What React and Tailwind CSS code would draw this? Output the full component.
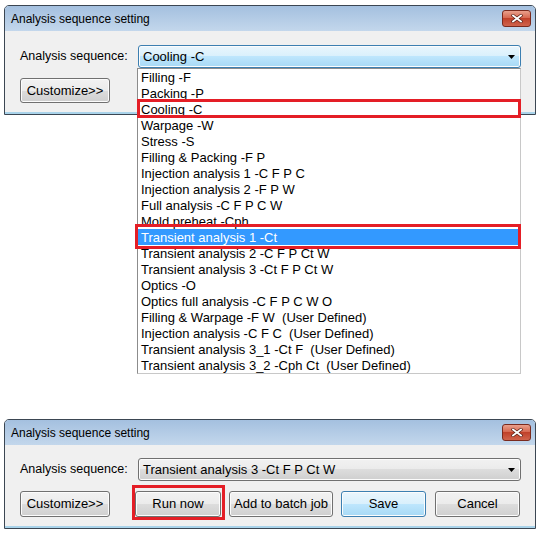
import React from 'react';

const items = [
  'Filling -F',
  'Packing -P',
  'Cooling -C',
  'Warpage -W',
  'Stress -S',
  'Filling & Packing -F P',
  'Injection analysis 1 -C F P C',
  'Injection analysis 2 -F P W',
  'Full analysis -C F P C W',
  'Mold preheat -Cph',
  'Transient analysis 1 -Ct',
  'Transient analysis 2 -C F P Ct W',
  'Transient analysis 3 -Ct F P Ct W',
  'Optics -O',
  'Optics full analysis -C F P C W O',
  'Filling & Warpage -F W  (User Defined)',
  'Injection analysis -C F C  (User Defined)',
  'Transient analysis 3_1 -Ct F  (User Defined)',
  'Transient analysis 3_2 -Cph Ct  (User Defined)',
];

const grayBtn =
  'border border-[#707070] rounded-[3px] bg-[linear-gradient(#f2f2f2,#ebebeb_50%,#dddddd_50%,#cfcfcf)] shadow-[inset_0_0_0_1px_#fcfcfc] flex items-center justify-center text-black';
const blueBtn =
  'border border-[#3c7fb1] rounded-[3px] bg-[linear-gradient(#eaf6fd,#d9f0fc_50%,#bee6fd_50%,#a7d9f5)] shadow-[inset_0_0_0_1px_#fcfcfc] flex items-center justify-center text-black';

const CloseButton = () => (
  <div className="w-[29px] h-[17px] rounded-[3px] border border-[#7a2a1e] bg-[linear-gradient(#e9a08c,#d5634b_50%,#c0412a_50%,#d0644c)] flex items-center justify-center">
    <svg width="12" height="9" viewBox="0 0 12 9">
      <path d="M2 1.5 L10 7.5 M10 1.5 L2 7.5" stroke="#5a2016" strokeWidth="3.2" strokeLinecap="square" />
      <path d="M2 1.5 L10 7.5 M10 1.5 L2 7.5" stroke="#ffffff" strokeWidth="1.8" strokeLinecap="square" />
    </svg>
  </div>
);

const Arrow = () => (
  <svg width="7" height="4" viewBox="0 0 7 4">
    <path d="M0 0 L7 0 L3.5 4 Z" fill="#000" />
  </svg>
);

const Window = ({ children }) => (
  <div className="w-[532px] border border-[#3b4652] rounded-t-[5px] overflow-hidden">
    <div className="h-[25px] flex items-center justify-between pl-[6px] pr-[4px] bg-[linear-gradient(#a4c0df,#c3d7ec)]">
      <span className="text-black text-[12px] pt-[1px]">Analysis sequence setting</span>
      <CloseButton />
    </div>
    <div className="bg-[#f0f0f0] border-b-2 border-[#a9d3ea] pl-[15px] pr-[14px]">{children}</div>
  </div>
);

export default function App() {
  return (
    <div className="relative w-[540px] h-[535px] bg-white font-['Liberation_Sans',Arial,sans-serif] text-[13px] overflow-hidden">
      <div className="pt-[5px] pl-[4px]">
        <Window>
          <div className="pt-[14px] pb-[9px]">
            <div className="flex items-center">
              <span className="w-[118px] text-black text-[12.5px]">Analysis sequence:</span>
              <div className={`${blueBtn} !justify-between w-[383px] h-[23px] pl-[4px] pr-[5px]`}>
                <span>Cooling -C</span>
                <Arrow />
              </div>
            </div>
            <div className="mt-[10px]">
              <div className={`${grayBtn} w-[90px] h-[25px]`}>Customize&gt;&gt;</div>
            </div>
          </div>
        </Window>

        <div className="mt-[304px]">
          <Window>
            <div className="pt-[13px] pb-[9px]">
              <div className="flex items-center">
                <span className="w-[118px] text-black text-[12.5px]">Analysis sequence:</span>
                <div className={`${grayBtn} !justify-between w-[383px] h-[23px] pl-[4px] pr-[5px]`}>
                  <span>Transient analysis 3 -Ct F P Ct W</span>
                  <Arrow />
                </div>
              </div>
              <div className="mt-[10px] flex">
                <div className={`${grayBtn} w-[90px] h-[26px]`}>Customize&gt;&gt;</div>
                <div className={`${grayBtn} w-[86px] h-[26px] ml-[25px]`}>Run now</div>
                <div className={`${grayBtn} w-[104px] h-[26px] ml-[8px]`}>Add to batch job</div>
                <div className={`${blueBtn} w-[85px] h-[26px] ml-[8px]`}>Save</div>
                <div className={`${grayBtn} w-[85px] h-[26px] ml-[9px]`}>Cancel</div>
              </div>
            </div>
          </Window>
        </div>
      </div>

      {/* open dropdown list */}
      <div className="absolute left-[137px] top-[68px] w-[384px] bg-white border border-[#8c8c8c] border-r-[#c8c8c8] border-b-[#c8c8c8]">
        {items.map((t, i) => (
          <div
            key={i}
            className={`h-[16px] leading-[16px] pl-[3px] pt-[1px] whitespace-pre ${
              i === 10 ? 'bg-[#3399ff] text-white' : 'text-black'
            }`}
          >
            {t}
          </div>
        ))}
      </div>

      {/* red annotation boxes */}
      <div className="absolute left-[137px] top-[99px] w-[384px] h-[19px] border-[3px] border-[#e41e26]" />
      <div className="absolute left-[135px] top-[224px] w-[386px] h-[25px] border-[3px] border-[#e41e26]" />
      <div className="absolute left-[132px] top-[485px] w-[93px] h-[35px] border-[3px] border-[#e41e26]" />
    </div>
  );
}
